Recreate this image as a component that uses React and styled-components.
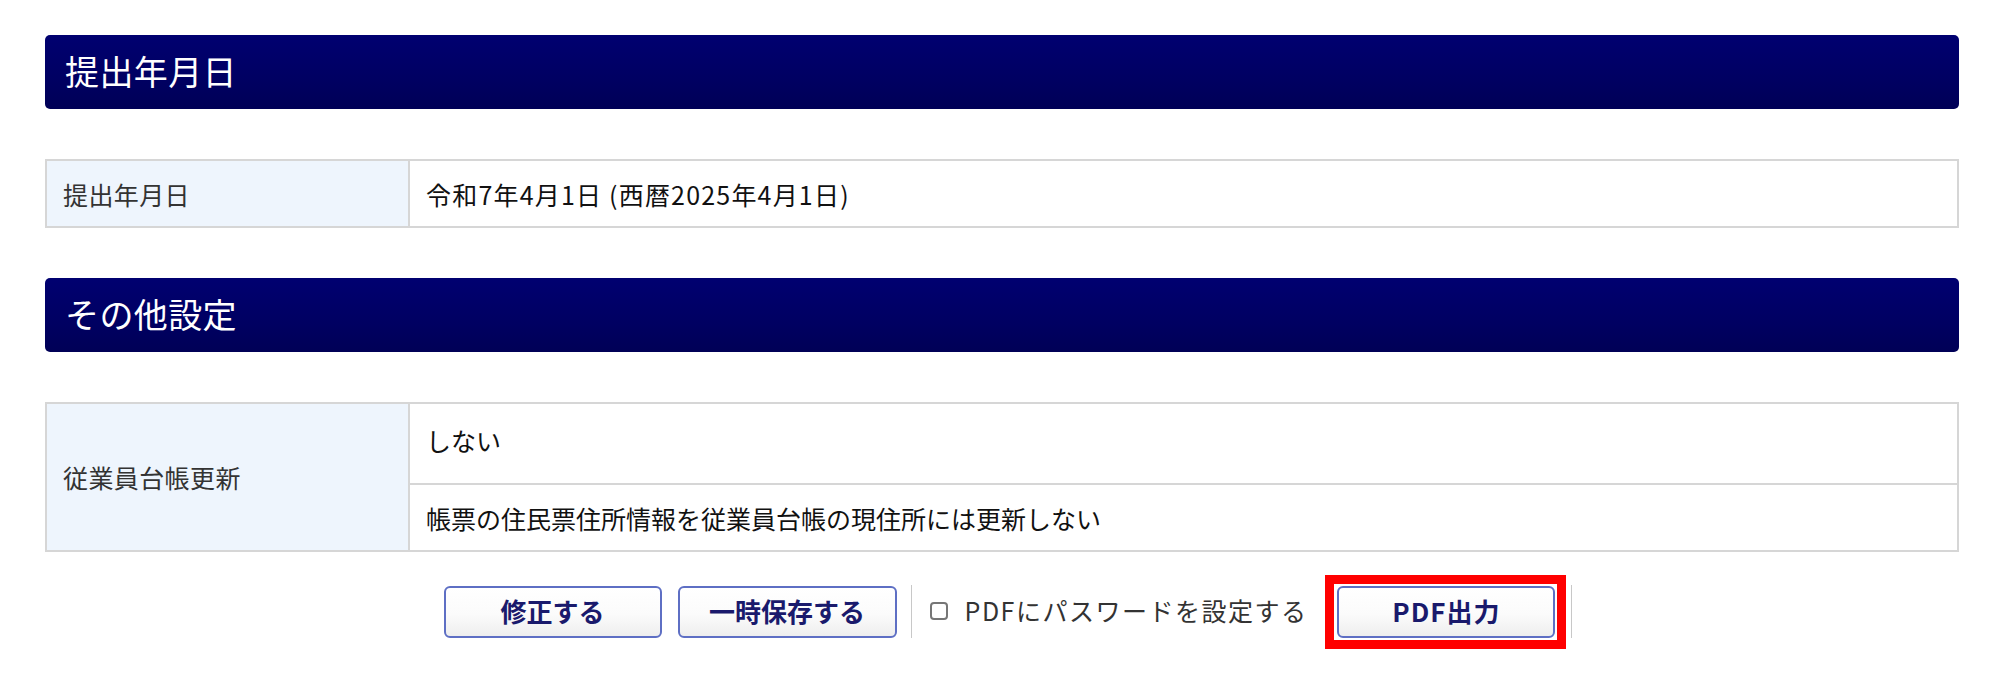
import React from "react";
import styled, { createGlobalStyle } from "styled-components";

const GlobalStyle = createGlobalStyle`
  html, body {
    margin: 0;
    padding: 0;
    background: #ffffff;
  }
  body {
    font-family: "Noto Sans CJK JP", "Noto Sans", sans-serif;
    color: #222;
  }
  * { box-sizing: border-box; }
`;

const Page = styled.div`
  width: 1914px;
  margin-left: 45px;
  padding-top: 35px;
  padding-bottom: 40px;
  display: flex;
  flex-direction: column;
  gap: 50px;
`;

const Section = styled.section`
  display: flex;
  flex-direction: column;
  gap: 50px;
`;

const SectionHeader = styled.h2`
  margin: 0;
  height: 74px;
  display: flex;
  align-items: center;
  padding: 0 0 4px 20px;
  border-radius: 5px;
  background: linear-gradient(to bottom, #000070 0%, #000062 60%, #000056 100%);
  color: #ffffff;
  font-size: 34px;
  font-weight: 400;
  letter-spacing: 0.4px;
`;

const Table = styled.div`
  display: grid;
  grid-template-columns: 363px 1fr;
  border: 2px solid #d6d6d6;
`;

const LabelCell = styled.div`
  grid-row: span ${(p) => p.$rows || 1};
  background: #eef5fd;
  border-right: 2px solid #d6d6d6;
  display: flex;
  align-items: center;
  padding-left: 16px;
  font-size: 25px;
  letter-spacing: 0.4px;
  color: #333;
`;

const ValueCell = styled.div`
  height: ${(p) => p.$h || 65}px;
  display: flex;
  align-items: center;
  padding-left: 16px;
  padding-bottom: ${(p) => p.$pb || 0}px;
  font-size: 25px;
  letter-spacing: ${(p) => p.$ls || 0}px;
  color: #111;
  border-top: ${(p) => (p.$divider ? "2px solid #d6d6d6" : "none")};
`;

const ActionRow = styled.div`
  margin-top: -17px;
  display: flex;
  align-items: center;
  justify-content: center;
  padding-left: 12px;
`;

const ActionButton = styled.button`
  position: relative;
  width: ${(p) => p.$w || 218}px;
  height: 52px;
  margin-right: ${(p) => p.$mr || 0}px;
  border: 2px solid #5e6fc4;
  border-radius: 6px;
  background: linear-gradient(to bottom, #ffffff 0%, #fbfbfb 55%, #eeeeee 100%);
  color: #1a1a6c;
  font-family: "Noto Sans CJK JP", "Noto Sans", sans-serif;
  font-size: 26px;
  font-weight: 700;
  letter-spacing: ${(p) => p.$ls || 0}px;
  padding: 0 0 3px;
  cursor: pointer;

  &::after {
    content: "";
    display: ${(p) => (p.$highlight ? "block" : "none")};
    position: absolute;
    left: -14px;
    right: -13px;
    top: -13px;
    bottom: -13px;
    border: 9px solid #ff0000;
    pointer-events: none;
  }
`;

const Separator = styled.span`
  display: block;
  width: 1px;
  height: 53px;
  background: #c8c8c8;
  margin: 0 ${(p) => p.$mr || 0}px 0 ${(p) => p.$ml || 0}px;
`;

const CheckLabel = styled.label`
  display: flex;
  align-items: center;
  gap: 17px;
  margin-left: 18px;
  margin-right: 30px;
  font-size: 25px;
  letter-spacing: 1.5px;
  color: #333;
  padding-bottom: 3px;
`;

const CheckBox = styled.input`
  appearance: none;
  margin: 2px 0 0;
  width: 18px;
  height: 18px;
  border: 2px solid #767676;
  border-radius: 4px;
  background: #fff;
`;

export default function App() {
  return (
    <>
      <GlobalStyle />
      <Page>
        <Section>
          <SectionHeader>提出年月日</SectionHeader>
          <Table>
            <LabelCell>提出年月日</LabelCell>
            <ValueCell $h={65} $ls={1.2}>令和7年4月1日 (西暦2025年4月1日)</ValueCell>
          </Table>
        </Section>
        <Section>
          <SectionHeader>その他設定</SectionHeader>
          <Table>
            <LabelCell $rows={2}>従業員台帳更新</LabelCell>
            <ValueCell $h={79} $pb={8}>しない</ValueCell>
            <ValueCell $h={67} $divider>帳票の住民票住所情報を従業員台帳の現住所には更新しない</ValueCell>
          </Table>
        </Section>
        <ActionRow>
          <ActionButton $mr={16}>修正する</ActionButton>
          <ActionButton $w={219}>一時保存する</ActionButton>
          <Separator $ml={14} />
          <CheckLabel>
            <CheckBox type="checkbox" />
            PDFにパスワードを設定する
          </CheckLabel>
          <ActionButton $highlight $ls={1}>PDF出力</ActionButton>
          <Separator $ml={16} />
        </ActionRow>
      </Page>
    </>
  );
}
